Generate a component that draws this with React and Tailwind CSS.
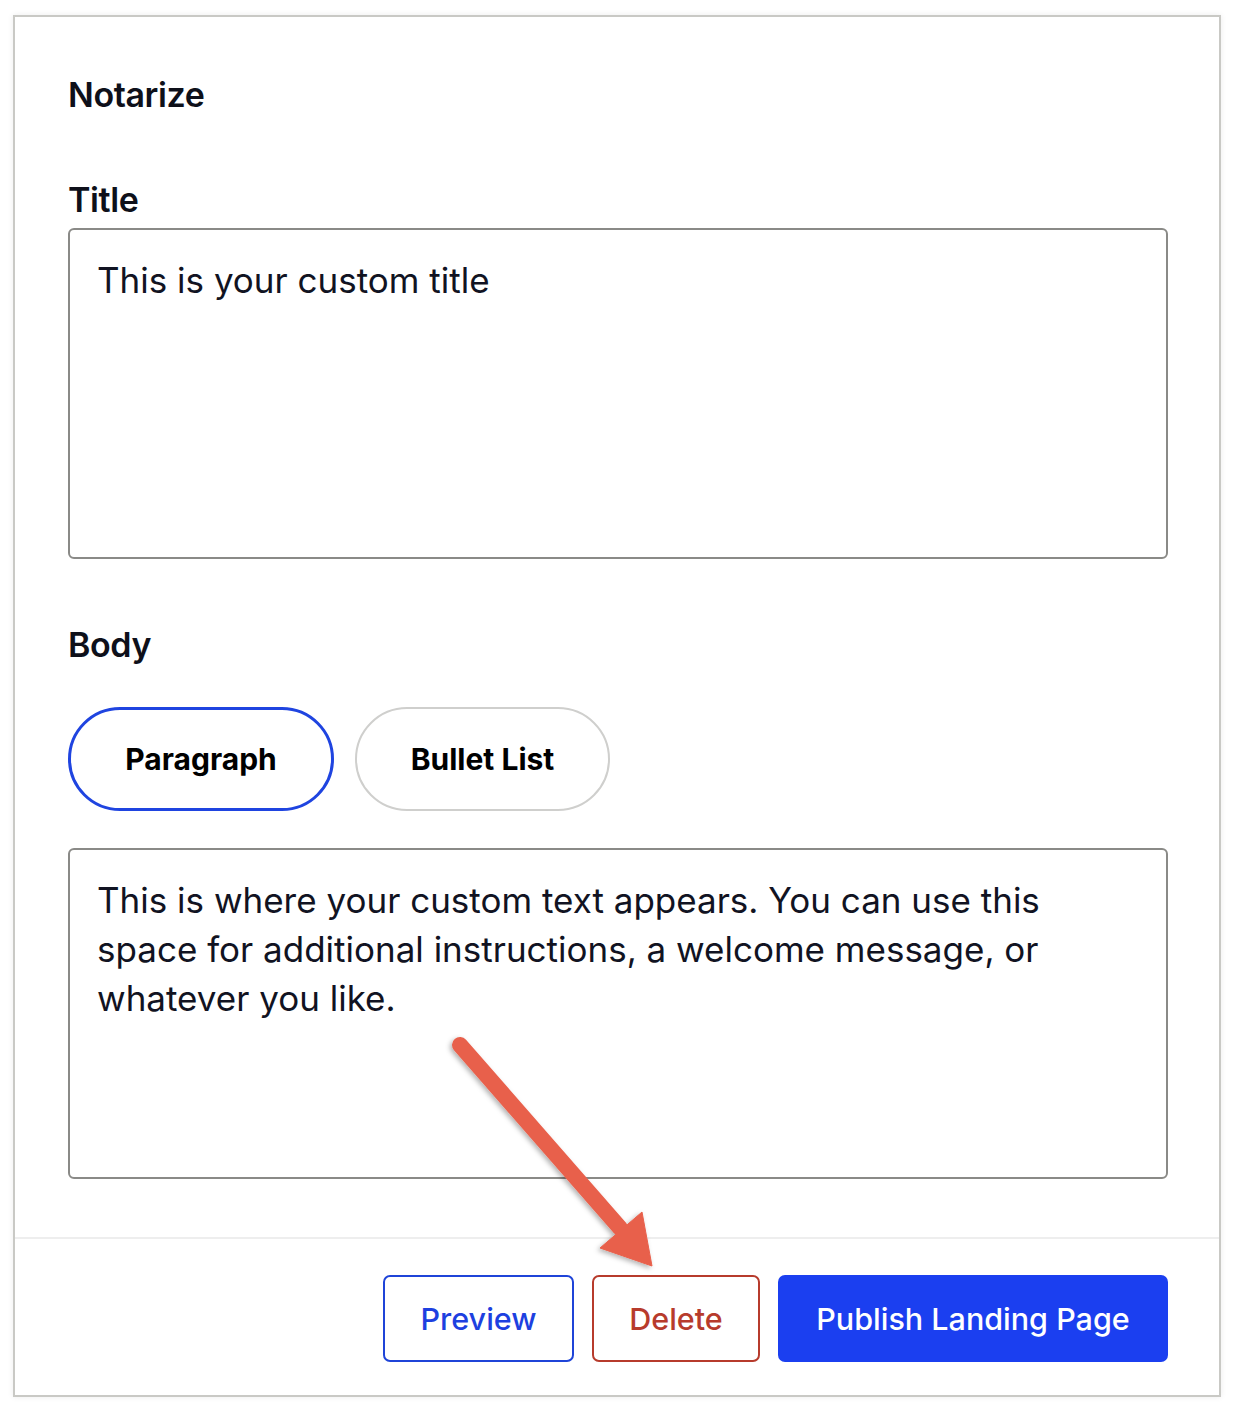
import React from "react";

export default function App() {
  return (
    <div className="relative w-[1240px] h-[1410px] bg-white" style={{ fontFamily: "Inter, 'Noto Sans', sans-serif" }}>
      <div className="ml-[13px] pt-[15px]">
        <div className="w-[1208px] h-[1382px] border-2 border-[#c9c9c5] bg-white shadow-[0_0_6px_rgba(0,0,0,0.08)] flex flex-col">
          <div className="pl-[53px] pr-[51px] pt-[58px] flex flex-col">
            <div className="text-[34px] leading-[40px] font-semibold text-[#0e101a] tracking-[-0.4px]">Notarize</div>
            <div className="mt-[65px] text-[34px] leading-[40px] font-semibold text-[#0e101a] tracking-[-0.4px]">Title</div>
            <div className="mt-[8px] h-[331px] border-2 border-[#8a8a87] rounded-[6px] px-[27px] pt-[26px] text-[35px] leading-[49px] text-[#111322]">
              This is your custom title
            </div>
            <div className="mt-[66px] text-[34px] leading-[40px] font-semibold text-[#0e101a] tracking-[-0.4px]">Body</div>
            <div className="mt-[42px] flex gap-[21px]">
              <div className="w-[266px] h-[104px] rounded-full border-[3px] border-[#1f44e0] flex items-center justify-center text-[30px] font-bold text-black">
                Paragraph
              </div>
              <div className="w-[255px] h-[104px] rounded-full border-2 border-[#cfcfcd] flex items-center justify-center text-[30px] font-bold text-black">
                Bullet List
              </div>
            </div>
            <div className="mt-[37px] h-[331px] border-2 border-[#8a8a87] rounded-[6px] px-[27px] pt-[26px] text-[35px] leading-[49px] text-[#111322]">
              This is where your custom text appears. You can use this space for additional instructions, a welcome message, or whatever you like.
            </div>
          </div>
          <div className="mt-[58px] border-t-2 border-[#eeeeee] pt-[36px] pr-[51px] flex justify-end gap-[18px]">
            <div className="w-[191px] h-[87px] rounded-[7px] border-2 border-[#1f44d8] flex items-center justify-center text-[30.5px] font-medium text-[#1d40e0]">
              Preview
            </div>
            <div className="w-[168px] h-[87px] rounded-[7px] border-2 border-[#b73b2c] flex items-center justify-center text-[30.5px] font-medium text-[#b73b2c]">
              Delete
            </div>
            <div className="w-[390px] h-[87px] rounded-[7px] bg-[#1b3ff0] flex items-center justify-center text-[30.5px] font-medium text-white">
              Publish Landing Page
            </div>
          </div>
        </div>
      </div>
      <svg className="absolute left-0 top-0 pointer-events-none" width="1240" height="1410" viewBox="0 0 1240 1410">
        <defs>
          <filter id="sh" x="-20%" y="-20%" width="140%" height="140%">
            <feDropShadow dx="-2" dy="2" stdDeviation="2.5" floodColor="#000" floodOpacity="0.3" />
          </filter>
        </defs>
        <g filter="url(#sh)" fill="#e8604b" stroke="#e8604b">
          <line x1="460" y1="1045" x2="620" y2="1228" strokeWidth="16" strokeLinecap="round" />
          <polygon points="600,1248 642,1212 652,1266" strokeWidth="1" strokeLinejoin="miter" />
        </g>
      </svg>
    </div>
  );
}
